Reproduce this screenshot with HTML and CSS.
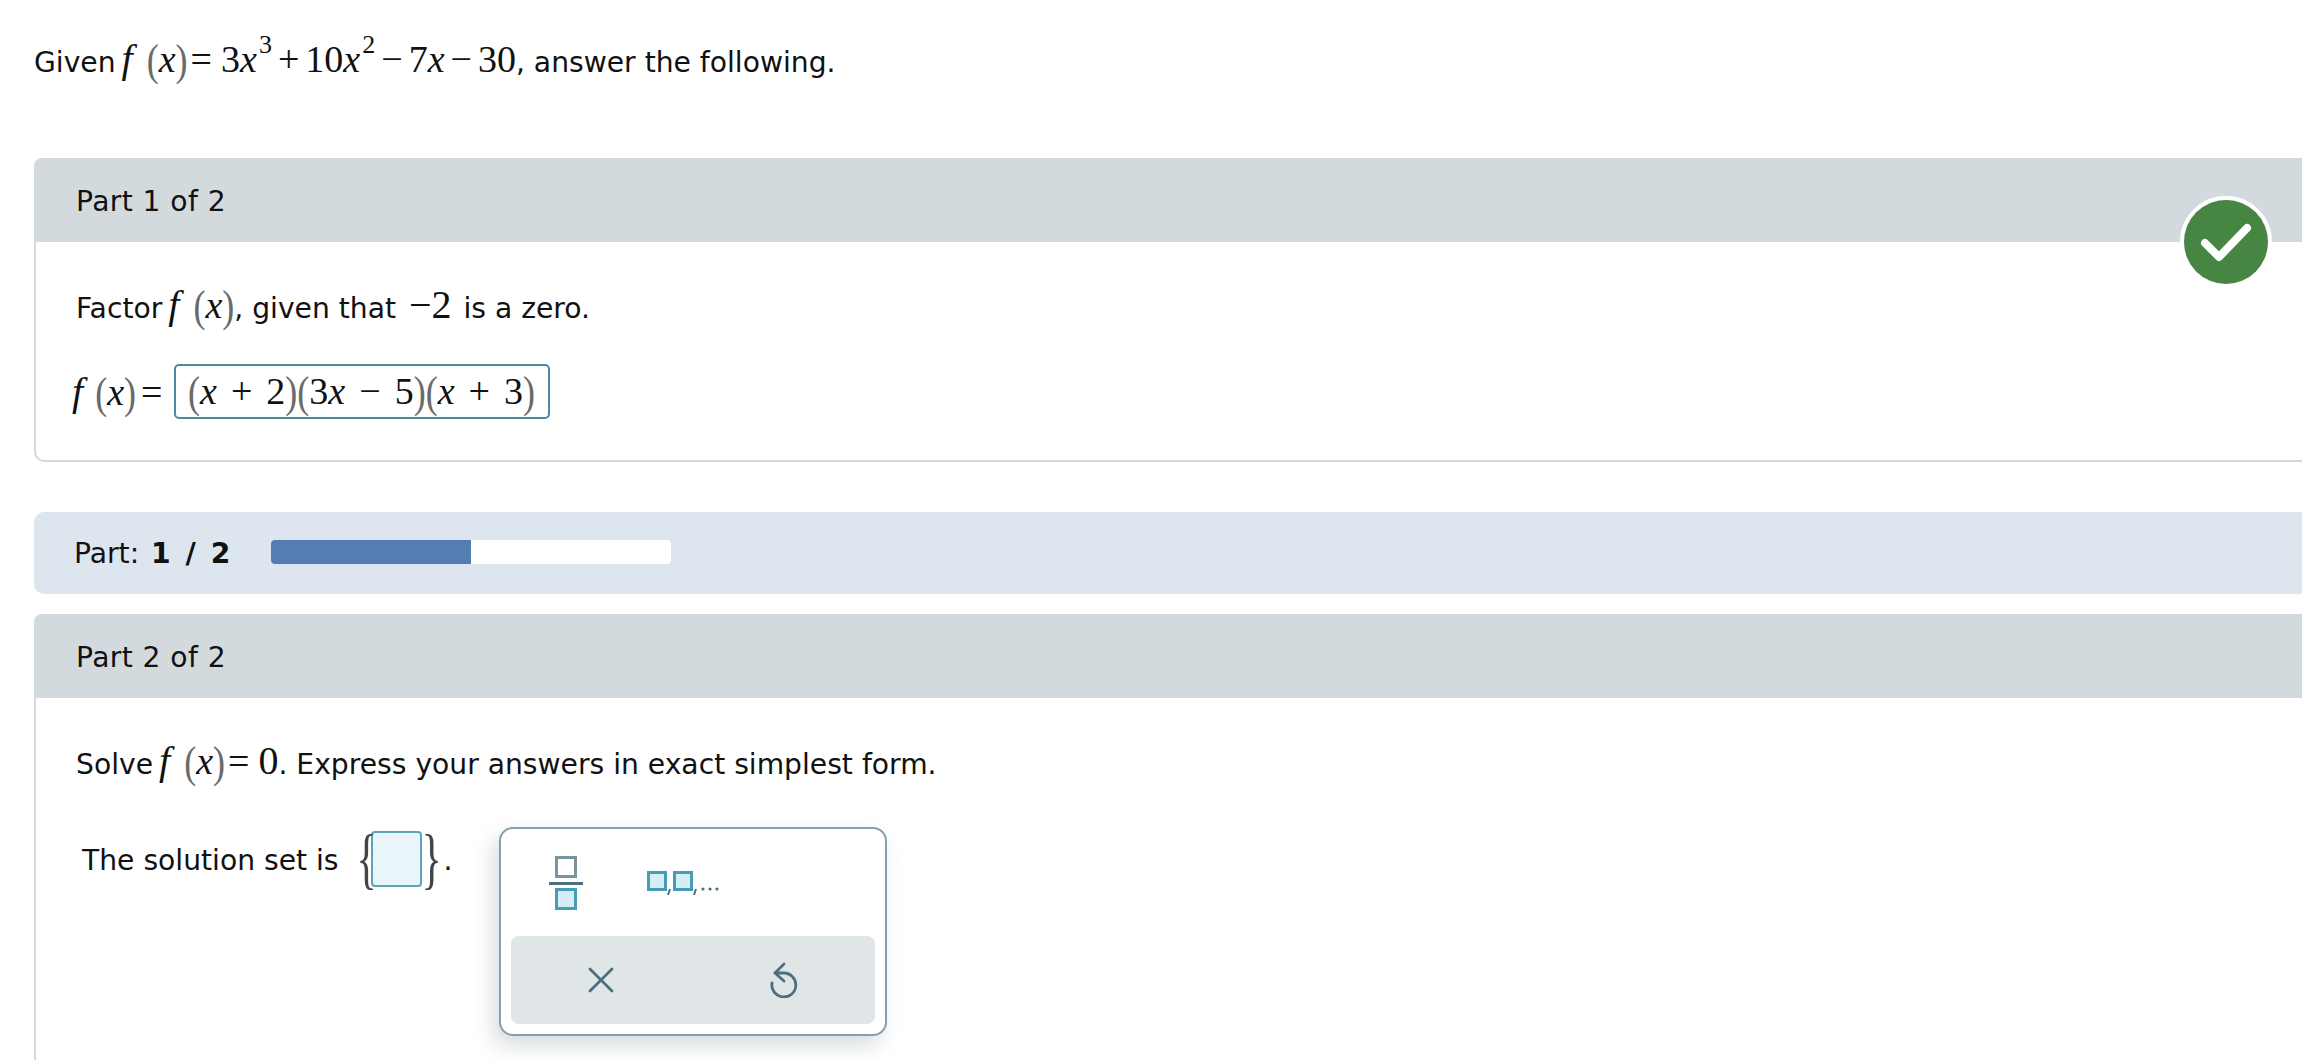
FILE: index.html
```html
<!DOCTYPE html>
<html lang="en">
<head>
    <meta charset="UTF-8">
    <meta name="viewport" content="width=device-width, initial-scale=1.0">
    <title>Part 2 of 2</title>
    <link rel="stylesheet" href="styles.css">
</head>
<body>
    <div class="question"><span class="lead">Given</span><span class="math"><i class="fn">f</i><span class="paren">(</span><i>x</i><span class="paren">)</span><span class="eq">=</span>3<i>x</i><sup>3</sup><span class="op-tight">+</span>10<i>x</i><sup>2</sup><span class="op-tight">−</span>7<i>x</i><span class="op-tight">−</span>30</span>, answer the following.</div>

    <section class="part part-one">
        <div class="part-head">Part 1 of 2</div>
        <div class="part-body">
            <p class="prompt"><span class="lead">Factor</span><span class="math"><i class="fn">f</i><span class="paren">(</span><i>x</i><span class="paren">)</span></span>, given that <span class="math big neg">−2</span> is a zero.</p>
            <div class="answer-row">
                <span class="math answer-label"><i class="fn">f</i><span class="paren">(</span><i>x</i><span class="paren">)</span><span class="eq">=</span></span>
                <div class="answer-box math"><span class="paren">(</span><i>x</i><span class="op">+</span>2<span class="paren">)</span><span class="paren">(</span>3<i>x</i><span class="op">−</span>5<span class="paren">)</span><span class="paren">(</span><i>x</i><span class="op">+</span>3<span class="paren">)</span></div>
            </div>
        </div>
        <div class="check-badge">
            <svg width="84" height="84" viewBox="0 0 84 84">
                <circle cx="42" cy="42" r="42" fill="#468642"/>
                <path d="M21 43 L35 57 L63 28" fill="none" stroke="#fff" stroke-width="8" stroke-linecap="round" stroke-linejoin="round"/>
            </svg>
        </div>
    </section>

    <div class="progress-bar">
        <span class="progress-label">Part: <b>1 / 2</b></span>
        <div class="progress-track"><div class="progress-fill" style="width: 50%"></div></div>
    </div>

    <section class="part part-two">
        <div class="part-head">Part 2 of 2</div>
        <div class="part-body">
            <p class="prompt"><span class="lead">Solve</span><span class="math"><i class="fn">f</i><span class="paren">(</span><i>x</i><span class="paren">)</span><span class="eq">=</span><span class="big">0</span></span>. Express your answers in exact simplest form.</p>
            <div class="solution-row">
                <span class="solution-label">The solution set is</span>
                <span class="set">
                    <span class="brace">{</span><span class="blank"></span><span class="brace">}</span>
                </span>
                <span class="dot">.</span>
                <div class="palette">
                    <div class="palette-tools">
                        <div class="frac-icon">
                            <span class="box-grey"></span>
                            <span class="frac-line"></span>
                            <span class="box-teal"></span>
                        </div>
                        <svg class="list-icon" width="72" height="26" viewBox="0 0 72 26">
                            <rect x="1.5" y="1.5" width="17" height="17" fill="#d5eef3" stroke="#459db6" stroke-width="3"/>
                            <rect x="27.5" y="1.5" width="17" height="17" fill="#d5eef3" stroke="#459db6" stroke-width="3"/>
                            <path d="M23 18 L21 24 M49 18 L47 24" stroke="#4d6f7d" stroke-width="2" fill="none"/>
                            <circle cx="56" cy="18" r="1.6" fill="#4d6f7d"/>
                            <circle cx="63" cy="18" r="1.6" fill="#4d6f7d"/>
                            <circle cx="70" cy="18" r="1.6" fill="#4d6f7d"/>
                        </svg>
                    </div>
                    <div class="palette-actions">
                        <svg width="26" height="26" viewBox="0 0 26 26">
                            <path d="M2 2 L24 24 M24 2 L2 24" stroke="#4d6f7d" stroke-width="2.8" stroke-linecap="round" fill="none"/>
                        </svg>
                        <svg class="undo-icon" width="28" height="36" viewBox="0 0 28 36">
                            <path d="M14 2 L5 11 L14 19" stroke="#4d6f7d" stroke-width="2.8" stroke-linecap="round" stroke-linejoin="round" fill="none"/>
                            <path d="M5 11 L14 11 A12 12 0 1 1 2 21" stroke="#4d6f7d" stroke-width="2.8" stroke-linecap="round" fill="none"/>
                        </svg>
                    </div>
                </div>
            </div>
        </div>
    </section>
</body>
</html>
```

FILE: styles.css
```css
html, body {
    margin: 0;
    padding: 0;
    overflow: hidden;
}
body {
    font-family: "DejaVu Sans", Verdana, sans-serif;
    font-size: 28.2px;
    color: #111;
    background-color: #fff;
    width: 2302px;
    height: 1060px;
    padding-left: 34px;
    box-sizing: border-box;
}
.question {
    height: 158px;
    padding-top: 39px;
    box-sizing: border-box;
    line-height: 40px;
    white-space: nowrap;
}
.lead {
    margin-right: 6px;
}
.math {
    font-family: "Liberation Serif", "Times New Roman", serif;
    font-size: 38px;
}
.math sup {
    font-size: 26px;
    line-height: 0;
    vertical-align: 19px;
    margin-left: 2px;
}
.fn {
    font-size: 40px;
    margin-right: 14px;
}
.big {
    font-size: 40px;
}
.neg {
    margin: 0 3px 0 4px;
}
.paren {
    display: inline-block;
    color: #6a6a6a;
    font-size: 36px;
    line-height: 30px;
    transform: scaleY(1.25);
}
.eq {
    margin: 0 9px 0 3px;
}
.op-tight {
    margin: 0 6px;
}
.op {
    margin: 0 14px;
}
.part {
    position: relative;
    margin-right: -10px;
}
.part-head {
    height: 84px;
    line-height: 87px;
    padding-left: 42px;
    letter-spacing: 0.4px;
    background-color: #d3dadd;
    border-radius: 8px 0 0 0;
}
.part-body {
    border-left: 2px solid #d3dadd;
    padding-left: 40px;
    padding-top: 43px;
    box-sizing: border-box;
}
.part-one .part-body {
    height: 220px;
    border-bottom: 2px solid #d3dadd;
    border-radius: 0 0 0 10px;
}
.part-two .part-body {
    height: 362px;
}
.prompt {
    margin: 0;
    line-height: 40px;
    white-space: nowrap;
}
.answer-row {
    display: flex;
    align-items: center;
    margin-top: 35px;
    margin-left: -4px;
}
.answer-label {
    white-space: nowrap;
    width: 102px;
    flex: none;
}
.answer-label .fn {
    margin-right: 12px;
}
.answer-label .eq {
    margin-left: 5px;
}
.answer-box {
    height: 55px;
    width: 376px;
    box-sizing: border-box;
    border: 2px solid #4a8aa2;
    border-radius: 5px;
    padding-left: 12px;
    line-height: 50px;
    white-space: nowrap;
}
.check-badge {
    position: absolute;
    left: 2146px;
    top: 38px;
    width: 84px;
    height: 84px;
    border: 4px solid #fff;
    border-radius: 50%;
    display: flex;
}
.progress-bar {
    display: flex;
    align-items: center;
    height: 82px;
    margin-top: 50px;
    margin-right: -10px;
    padding-left: 40px;
    background-color: #dde6ef;
    border-radius: 10px 0 0 10px;
}
.progress-label {
    white-space: nowrap;
    width: 197px;
}
.progress-label b {
    margin-left: 3px;
    letter-spacing: 2.5px;
}
.progress-track {
    width: 400px;
    height: 24px;
    margin-bottom: 2px;
    border-radius: 4px;
    background-color: #fff;
    overflow: hidden;
}
.progress-fill {
    height: 100%;
    background-color: #547db1;
}
.part-two {
    margin-top: 20px;
}
.solution-row {
    display: flex;
    align-items: flex-start;
    margin-top: 42px;
    margin-left: 6px;
}
.solution-label {
    margin-top: 14px;
    line-height: 40px;
    white-space: nowrap;
}
.set {
    display: flex;
    align-items: center;
    margin-left: 18px;
    margin-top: 4px;
    height: 56px;
}
.brace {
    display: block;
    width: 14px;
    font-family: "Liberation Serif", serif;
    font-size: 42px;
    line-height: 50px;
    text-align: center;
    color: #444;
    transform: scale(1, 1.6);
}
.blank {
    width: 51px;
    height: 56px;
    box-sizing: border-box;
    background-color: #eaf5fa;
    border: 2px solid #5da4b9;
    border-radius: 4px;
}
.dot {
    margin: 14px 0 0 8px;
    line-height: 40px;
}
.palette {
    width: 388px;
    height: 209px;
    box-sizing: border-box;
    margin-left: 46px;
    border: 2px solid #87a0ab;
    border-radius: 14px;
    background-color: #fff;
    box-shadow: -6px 10px 20px rgba(80, 100, 115, 0.22);
    padding: 0 10px 10px;
    flex: none;
}
.palette-tools {
    height: 107px;
    display: flex;
    align-items: center;
    padding-left: 38px;
}
.frac-icon {
    display: flex;
    flex-direction: column;
    align-items: center;
    width: 34px;
}
.box-grey, .box-teal {
    display: block;
    width: 22px;
    height: 22px;
    box-sizing: border-box;
    border: 3px solid #7c939e;
    background-color: #fff;
}
.box-teal {
    border-color: #459db6;
    background-color: #d5eef3;
}
.frac-line {
    display: block;
    width: 34px;
    height: 3px;
    margin: 4px 0 3px;
    background-color: #4d6f7d;
}
.list-icon {
    margin-left: 64px;
    margin-top: 2px;
}
.palette-actions {
    height: 88px;
    background-color: #e0e5e8;
    border-radius: 8px;
    display: flex;
    align-items: center;
    padding-left: 77px;
    gap: 156px;
}
```
